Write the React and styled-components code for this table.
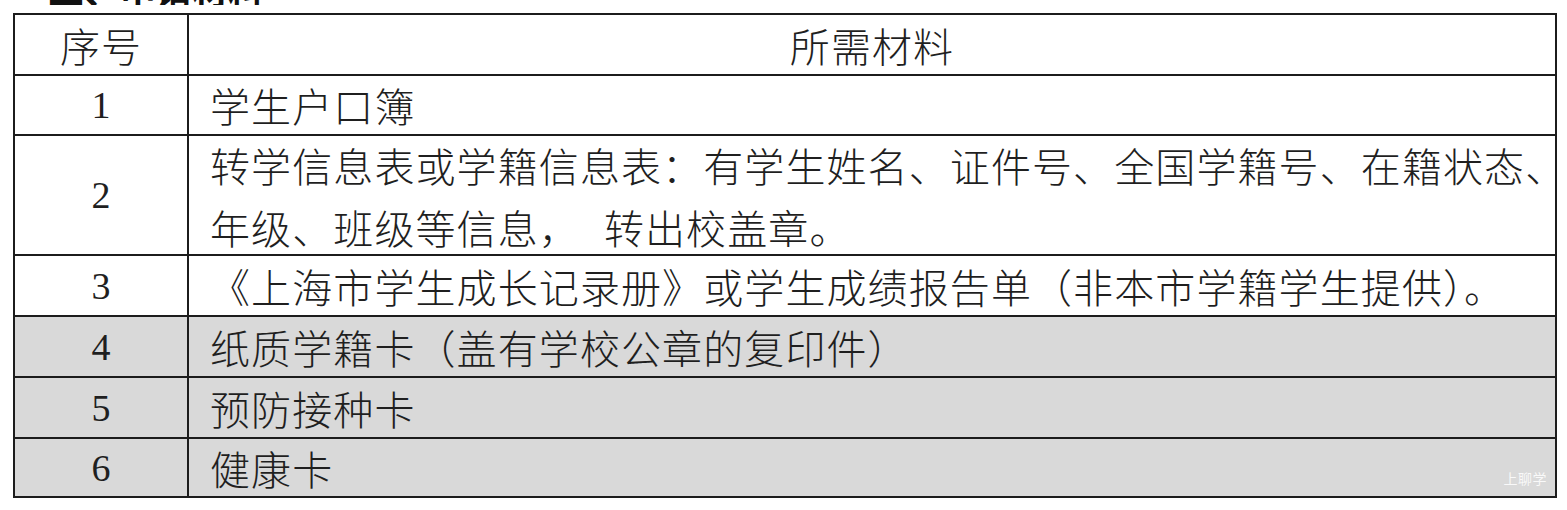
import React from "react";
import styled, { createGlobalStyle } from "styled-components";

const GlobalStyle = createGlobalStyle`
  html, body {
    margin: 0;
    padding: 0;
    background: #ffffff;
  }
  body {
    font-family: "Liberation Serif", "Noto Sans CJK SC", serif;
    color: #1f1f1f;
  }
`;

const Page = styled.div`
  width: 1567px;
  height: 510px;
  overflow: hidden;
  box-sizing: border-box;
`;

// only the lower edge of the section title is visible in the shot
const HeadingStrip = styled.div`
  height: 5px;
  overflow: hidden;
  display: flex;
  align-items: flex-end;
  padding-left: 48px;
  margin-bottom: 8px;
`;

const Heading = styled.h2`
  margin: 0;
  font-family: "Noto Sans CJK SC", sans-serif;
  font-weight: 700;
  font-size: 36px;
  line-height: 32px;
  color: #111;
  white-space: nowrap;
`;

const TableWrap = styled.div`
  position: relative;
  margin-left: 13px;
  width: 1544px;
`;

const Grid = styled.div`
  display: grid;
  grid-template-columns: 174px 1368px;
  border-top: 2px solid #1c1c1c;
  border-left: 2px solid #1c1c1c;
  box-sizing: border-box;
`;

const Cell = styled.div`
  box-sizing: border-box;
  height: ${(p) => p.$h}px;
  border-right: 2px solid #1c1c1c;
  border-bottom: 2px solid #1c1c1c;
  background: ${(p) => (p.$shade ? "#d9d9d9" : "#ffffff")};
  display: flex;
  align-items: center;
  justify-content: ${(p) => (p.$center ? "center" : "flex-start")};
  padding: ${(p) => (p.$center ? "0" : "0 0 0 21px")};
  font-size: 40px;
  line-height: 58px;
  white-space: nowrap;
  font-weight: 300;
`;

const Num = styled.span`
  font-family: "Liberation Serif", serif;
  font-size: 38px;
  font-weight: 400;
`;

const Cjk = styled.span`
  font-family: "Noto Sans CJK SC", sans-serif;
  font-weight: 300;
  letter-spacing: 1.1px;
`;

const Lines = styled.div`
  padding-top: 6px;
`;

const Gap = styled.span`
  display: inline-block;
  width: 24px;
`;

const Watermark = styled.div`
  position: absolute;
  right: 10px;
  bottom: 10px;
  font-family: "Noto Sans CJK SC", sans-serif;
  font-size: 14px;
  color: rgba(255, 255, 255, 0.85);
  letter-spacing: 0.5px;
`;

const rows = [
  { no: "1", h: 60, text: "学生户口簿" },
  {
    no: "2",
    h: 120,
    lines: [
      "转学信息表或学籍信息表：有学生姓名、证件号、全国学籍号、在籍状态、",
      "年级、班级等信息，",
    ],
    tail: "转出校盖章。",
  },
  {
    no: "3",
    h: 61,
    text: "《上海市学生成长记录册》或学生成绩报告单（非本市学籍学生提供）。",
  },
  { no: "4", h: 61, text: "纸质学籍卡（盖有学校公章的复印件）", shade: true },
  { no: "5", h: 61, text: "预防接种卡", shade: true },
  { no: "6", h: 59, text: "健康卡", shade: true },
];

export default function App() {
  return (
    <Page>
      <GlobalStyle />
      <HeadingStrip>
        <Heading>二、申请材料</Heading>
      </HeadingStrip>
      <TableWrap>
        <Grid>
          <Cell $h={61} $center>
            <Cjk>序号</Cjk>
          </Cell>
          <Cell $h={61} $center>
            <Cjk>所需材料</Cjk>
          </Cell>
          {rows.map((r) => (
            <React.Fragment key={r.no}>
              <Cell $h={r.h} $center $shade={r.shade}>
                <Num>{r.no}</Num>
              </Cell>
              <Cell $h={r.h} $shade={r.shade}>
                {r.lines ? (
                  <Lines>
                    <Cjk>{r.lines[0]}</Cjk>
                    <br />
                    <Cjk>{r.lines[1]}</Cjk>
                    <Gap />
                    <Cjk>{r.tail}</Cjk>
                  </Lines>
                ) : (
                  <Cjk>{r.text}</Cjk>
                )}
              </Cell>
            </React.Fragment>
          ))}
        </Grid>
        <Watermark>上聊学</Watermark>
      </TableWrap>
    </Page>
  );
}
